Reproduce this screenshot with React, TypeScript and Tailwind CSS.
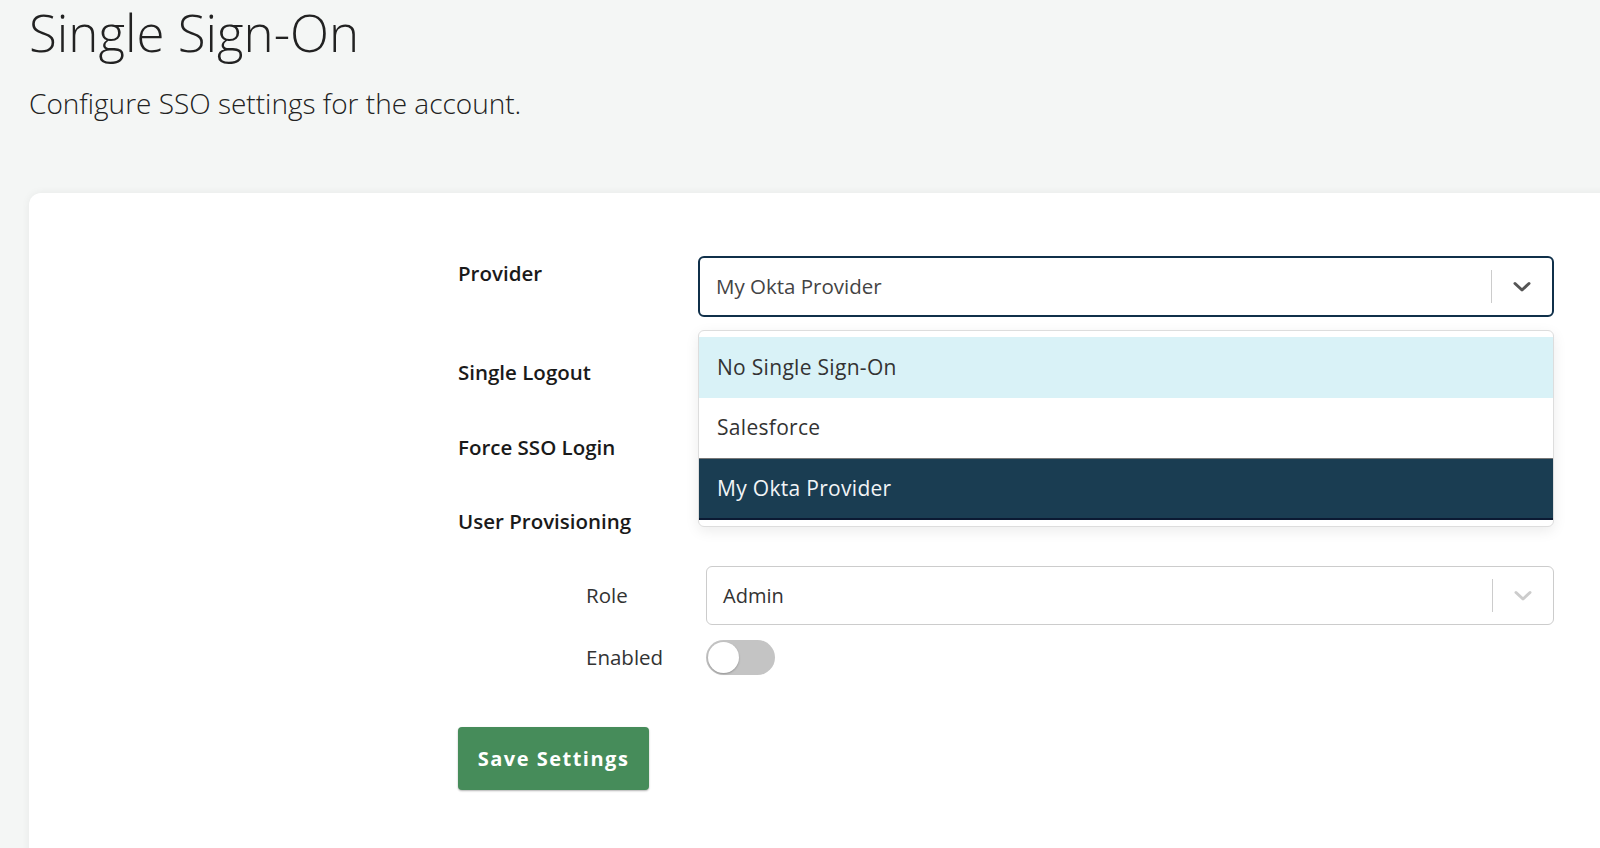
import React from "react";

function Chevron({ color }: { color: string }) {
  return (
    <svg width="20" height="12" viewBox="0 0 20 12" fill="none">
      <path d="M3 2.5 L10 9 L17 2.5" stroke={color} strokeWidth="3" strokeLinecap="round" strokeLinejoin="round" />
    </svg>
  );
}

export default function App() {
  const font = { fontFamily: "'Open Sans', sans-serif" };
  return (
    <div className="w-[1600px] h-[848px] overflow-hidden bg-[#f4f6f5] text-[#1f1f1f]" style={font}>
      <div className="pl-[29px]">
        <h1 className="text-[51px] font-light leading-[64px] text-[#222]">Single Sign-On</h1>
        <p className="mt-[21px] text-[28px] font-light leading-[36px] text-[#222]">Configure SSO settings for the account.</p>
      </div>
      <div className="ml-[29px] mt-[72px] w-[1600px] h-[700px] rounded-[12px] bg-white shadow-[0_0_8px_rgba(0,0,0,0.06)] pl-[429px] pt-[63px]">
        <div className="flex">
          <div className="w-[240px] pt-[3px] text-[20.5px] font-semibold leading-[28px] text-[#1a1a1a]">Provider</div>
          <div className="relative">
            <div className="flex h-[61px] w-[856px] items-center rounded-[6px] border-2 border-[#10304a] bg-white pl-[16px]">
              <span className="flex-1 text-[20.5px] text-[#444]">My Okta Provider</span>
              <span className="h-[33px] w-px bg-[#cccccc]" />
              <span className="flex w-[60px] justify-center">
                <Chevron color="#555" />
              </span>
            </div>
            <div className="absolute left-0 top-[74px] z-10 w-[856px] overflow-hidden rounded-[6px] border border-[#dddddd] bg-white pt-[6px] pb-[6px] shadow-[0_4px_14px_rgba(0,0,0,0.08)]">
              <div className="flex h-[61px] items-center bg-[#d9f2f7] pl-[18px] text-[21px] tracking-[0.3px] text-[#333]">No Single Sign-On</div>
              <div className="flex h-[61px] items-center border-b border-[#777] bg-white pl-[18px] text-[21px] tracking-[0.3px] text-[#333]">Salesforce</div>
              <div className="flex h-[61px] items-center border-b-2 border-[#0b1a33] bg-[#1a3d52] pl-[18px] text-[21px] tracking-[0.3px] text-[#f1f4f6]">My Okta Provider</div>
            </div>
          </div>
        </div>
        <div className="mt-[43px] text-[20.5px] font-semibold leading-[24px] text-[#1a1a1a]">Single Logout</div>
        <div className="mt-[51px] text-[20.5px] font-semibold leading-[24px] text-[#1a1a1a]">Force SSO Login</div>
        <div className="mt-[50px] text-[20.5px] font-semibold leading-[24px] text-[#1a1a1a]">User Provisioning</div>
        <div className="mt-[33px] flex items-center pl-[128px]">
          <div className="w-[120px] text-[20.5px] text-[#333]">Role</div>
          <div className="flex h-[59px] w-[848px] items-center rounded-[6px] border border-[#cccccc] bg-white pl-[16px]">
            <span className="flex-1 text-[20px] text-[#333]">Admin</span>
            <span className="h-[33px] w-px bg-[#cccccc]" />
            <span className="flex w-[60px] justify-center">
              <Chevron color="#cccccc" />
            </span>
          </div>
        </div>
        <div className="mt-[15px] flex items-center pl-[128px]">
          <div className="w-[120px] text-[20.5px] text-[#333]">Enabled</div>
          <div className="relative h-[35px] w-[69px] rounded-full bg-[#c4c4c4]">
            <div className="absolute left-[2px] top-[2px] h-[31px] w-[31px] rounded-full bg-white shadow-[0_1px_2px_rgba(0,0,0,0.25)]" />
          </div>
        </div>
        <button className="mt-[52px] flex h-[63px] w-[191px] items-center justify-center rounded-[4px] bg-[#468c5a] text-[20px] font-bold tracking-[1.5px] text-white shadow-[0_1px_2px_rgba(0,0,0,0.3)]">
          Save Settings
        </button>
      </div>
    </div>
  );
}
